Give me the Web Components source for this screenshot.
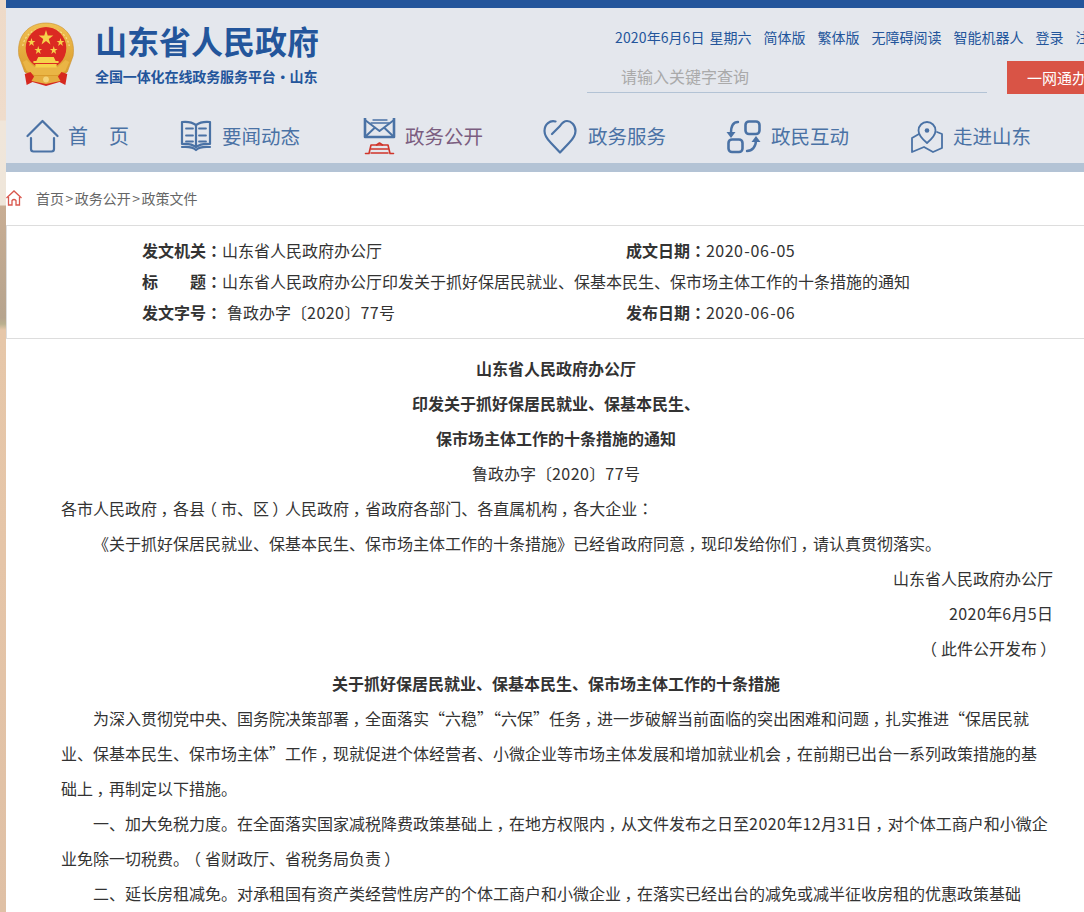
<!DOCTYPE html>
<html lang="zh-CN">
<head>
<meta charset="utf-8">
<title>山东省人民政府</title>
<style>
html,body{margin:0;padding:0;height:912px;overflow:hidden}
body{font-family:"Microsoft YaHei","Noto Sans CJK SC","Noto Sans",sans-serif;color:#333;
background:linear-gradient(to bottom,#eedac8 0,#efdccb 120px,#f0e6da 121px,#efe6da 205px,#c8ad93 206px,#b6a48e 318px,#b9b08f 324px,#e6c7a9 330px,#e5c5a8 560px,#dfc0a5 912px) no-repeat 0 0/6px 912px}
gov-page{display:block;margin-left:6px;background:#fff;height:912px}
</style>
</head>
<body>
<gov-page>
  <site-header>
    <top-links></top-links>
  </site-header>
  <nav-bar>
    <nav-item label="首　页" icon="home"></nav-item>
    <nav-item label="要闻动态" icon="book"></nav-item>
    <nav-item label="政务公开" icon="mail" active></nav-item>
    <nav-item label="政务服务" icon="heart"></nav-item>
    <nav-item label="政民互动" icon="swap"></nav-item>
    <nav-item label="走进山东" icon="map"></nav-item>
  </nav-bar>
  <bread-crumb></bread-crumb>
  <doc-meta></doc-meta>
  <doc-body>
    <doc-para kind="title">山东省人民政府办公厅</doc-para>
    <doc-para kind="title">印发关于抓好保居民就业、保基本民生、</doc-para>
    <doc-para kind="title">保市场主体工作的十条措施的通知</doc-para>
    <doc-para kind="center">鲁政办字〔2020〕77号</doc-para>
    <doc-para>各市人民政府，各县（市、区）人民政府，省政府各部门、各直属机构，各大企业：</doc-para>
    <doc-para kind="indent">《关于抓好保居民就业、保基本民生、保市场主体工作的十条措施》已经省政府同意，现印发给你们，请认真贯彻落实。</doc-para>
    <doc-para kind="right">山东省人民政府办公厅</doc-para>
    <doc-para kind="right">2020年6月5日</doc-para>
    <doc-para kind="right">（此件公开发布）</doc-para>
    <doc-para kind="title">关于抓好保居民就业、保基本民生、保市场主体工作的十条措施</doc-para>
    <doc-para kind="indent">为深入贯彻党中央、国务院决策部署，全面落实“六稳”“六保”任务，进一步破解当前面临的突出困难和问题，扎实推进“保居民就业、保基本民生、保市场主体”工作，现就促进个体经营者、小微企业等市场主体发展和增加就业机会，在前期已出台一系列政策措施的基础上，再制定以下措施。</doc-para>
    <doc-para kind="indent">一、加大免税力度。在全面落实国家减税降费政策基础上，在地方权限内，从文件发布之日至2020年12月31日，对个体工商户和小微企业免除一切税费。（省财政厅、省税务局负责）</doc-para>
    <doc-para kind="indent">二、延长房租减免。对承租国有资产类经营性房产的个体工商户和小微企业，在落实已经出台的减免或减半征收房租的优惠政策基础</doc-para>
  </doc-body>
</gov-page>
<script>
const FONT='"Microsoft YaHei","Noto Sans CJK SC","Noto Sans",sans-serif';
const TYPE=`.p{display:inline-block;text-indent:0;transform:translateX(.22em)}
.c{font-family:"Noto Sans CJK TC",sans-serif}
.l{display:inline-block;text-indent:0;transform:translateX(-.25em)}
.r{display:inline-block;text-indent:0;transform:translateX(.2em)}
.d{letter-spacing:.45px}
.h{margin:0 .85px}`;
function shadow(el,html){const r=el.attachShadow({mode:'open'});r.innerHTML=html;return r;}
function punct(s){return s.replace(/[，：（）-]|\d+/g,m=>{
  if(m==='，')return `<span class="p">${m}</span>`;
  if(m==='：')return `<span class="c" lang="zh-TW">${m}</span>`;
  if(m==='（')return `<span class="l">${m}</span>`;
  if(m==='）')return `<span class="r">${m}</span>`;
  if(m==='-')return `<span class="h">${m}</span>`;
  return `<span class="d">${m}</span>`;
});}

const EMBLEM=`<svg width="58" height="66" viewBox="0 0 60 66" preserveAspectRatio="none" aria-hidden="true" style="filter:blur(.35px)">
<defs><linearGradient id="g" x1="0" y1="0" x2="0" y2="1"><stop offset="0" stop-color="#f0c052"/><stop offset="1" stop-color="#d99a2b"/></linearGradient></defs>
<path d="M8 50 2 34C-1 14 12 1 30 1s31 13 28 33l-6 16-8 5H16z" fill="url(#g)" stroke="#c98d2a" stroke-width=".6"/>
<path d="M6 24C8 12 18 6 30 6s22 6 24 18" fill="none" stroke="#f8dd8c" stroke-width="1.2" stroke-dasharray="2 2"/>
<circle cx="30" cy="26" r="21" fill="#db2a22"/>
<path d="M6 40 10 49 18 53H42L50 49 54 40 50 38 42 45H18L10 38z" fill="#eab545"/>
<g fill="#f6d24a">
<polygon points="30,8 31.800,13.500 37.500,13.500 32.900,16.900 34.600,22.400 30,19 25.400,22.400 27.100,16.900 22.500,13.500 28.200,13.500"/>
<polygon points="15,16 16,19 19,19 16.600,20.800 17.500,24 15,22 12.500,24 13.400,20.800 11,19 14,19"/>
<polygon points="45,16 46,19 49,19 46.600,20.800 47.500,24 45,22 42.500,24 43.400,20.800 41,19 44,19"/>
<polygon points="22,24 23,27 26,27 23.600,28.800 24.500,32 22,30 19.500,32 20.400,28.800 18,27 21,27"/>
<polygon points="38,24 39,27 42,27 39.600,28.800 40.500,32 38,30 35.500,32 36.400,28.800 34,27 37,27"/>
<path d="M20 39 22 35H38L40 39H43V41H17V39z"/><rect x="19" y="42" width="22" height="3.500"/>
</g>
<path d="M8 52 14 50 18 55H42L46 50 52 52 50 63 44 60 30 64 16 60 10 63z" fill="#d6281f"/>
<path d="M18 54H42L45 59 30 62 15 59z" fill="#e5ad3f"/>
<circle cx="30" cy="57.500" r="3" fill="#f4d37a"/>
</svg>`;

class SiteHeader extends HTMLElement{constructor(){super();shadow(this,`<style>
:host{display:flex;box-sizing:border-box;height:105px;border-top:8px solid #23559b;background:#e4e7ed;overflow:hidden;font-family:${FONT}}
.logo{flex:none;width:581px;display:flex;align-items:flex-start;padding:14px 0 0 11px;box-sizing:border-box}
.logo svg{flex:none}
.names{margin-left:20px;color:#23559b;font-weight:700}
.t{font-size:32px;line-height:40px;margin-top:-2px;white-space:nowrap}
.s{font-size:14px;line-height:20px;margin-top:6px;white-space:nowrap;letter-spacing:-.1px}
.side{flex:none;width:520px}
</style><div class="logo">${EMBLEM}<div class="names"><div class="t">山东省人民政府</div><div class="s">全国一体化在线政务服务平台·山东</div></div></div>
<div class="side"><slot></slot></div>`);}}
customElements.define('site-header',SiteHeader);

class TopLinks extends HTMLElement{constructor(){super();shadow(this,`<style>
:host{display:block;font-family:${FONT}}
.links{display:flex;gap:12px;padding:18px 0 0 28px;height:22px;line-height:22px;font-size:14px;color:#23559b;white-space:nowrap}
.date{display:flex;gap:5px}
.num{letter-spacing:.15px}
.row{display:flex;margin-top:13px}
.search{flex:none;width:400px;height:32px;box-sizing:border-box;border-bottom:1px solid #b3c3d5;padding-left:34px;font-size:16px;line-height:31px;color:#aaa;white-space:nowrap}
.btn{flex:none;margin-left:20px;width:120px;height:33px;background:#d95446;color:#fff;font-size:15px;line-height:33px;padding-left:20px;box-sizing:border-box;white-space:nowrap}
</style><div class="links"><span class="date"><span><span class="num">2020</span>年<span class="num">6</span>月<span class="num">6</span>日</span><span>星期六</span></span><span>简体版</span><span>繁体版</span><span>无障碍阅读</span><span>智能机器人</span><span>登录</span><span>注册</span></div>
<div class="row"><div class="search">请输入关键字查询</div><div class="btn">一网通办</div></div>`);}}
customElements.define('top-links',TopLinks);

class NavBar extends HTMLElement{constructor(){super();shadow(this,`<style>
:host{display:grid;grid-template-columns:154px 183px 183px 183px 182px 1fr;box-sizing:border-box;height:67px;padding:0 0 0 20px;background:#e4e7ed;border-bottom:9px solid #b3c3d5;overflow:hidden}
</style><slot></slot>`);}}
customElements.define('nav-bar',NavBar);

const I={
home:{w:34,h:36,m:0,s:`<path d="M1.500 18 16.500 3 31.500 18"/><path d="M5 20V31q0 2.500 2.500 2.500H25.500q2.500 0 2.500-2.500V20"/>`},
book:{w:32,h:34,m:0,s:`<path d="M16 7C12 4 7 3.500 2 4V26C7 25.500 12 26 16 29C20 26 25 25.500 30 26V4C25 3.500 20 4 16 7V29"/><path d="M2 29C8 28.500 13 29 16 32C19 29 24 28.500 30 29"/><path d="M6 11H13M6 18H13M19 11H26M19 18H26M6 24H13M19 24H26" stroke-width="1.800" transform="translate(0 -.5)"/>`},
mail:{w:34,h:40,m:0,s:`<path d="M10 2H24M8 5H26" stroke-width="1.300"/><path d="M2 0V19H31V0" stroke-width="2.600"/><path d="M2 2 16.500 13 31 2M2 19 12 9.500M31 19 21 9.500" stroke-width="2"/><g stroke="#d0352a" stroke-width="1.600"><path d="M2.500 35.500H6L8 27H25L27 35.500H30.500"/><path d="M8 31H25M8 35H25"/><path d="M13.500 27 16.500 25 19.500 27"/></g>`},
heart:{w:36,h:36,m:0,o:-3,s:`<path d="M12.500 3.500C7 2 1.500 6 1.500 13C1.500 18 4 21 8 25L17 34.500 26 25C30 21 32.500 18 32.500 13C32.500 7 28 3 24 3C21 3 19 5 17 8L9 16"/>`},
swap:{w:36,h:36,m:0,o:-3,s:`<rect x="19.500" y="3.500" width="14" height="12.500" rx="3.500" stroke-width="2.600"/><rect x="2.500" y="21.500" width="14" height="12.500" rx="3.500" stroke-width="2.600"/><path d="M12 4C7.500 4 5 8 5 15" stroke-width="2.400"/><path d="M.5 14 9.500 14 5 20Z" fill="#4a72a5" stroke="none"/><path d="M21 33C26 33 30 29 30 22" stroke-width="2.400"/><path d="M25.500 24 34.500 24 30 18Z" fill="#4a72a5" stroke="none"/>`},
map:{w:34,h:36,m:0,s:`<path d="M16 25C10 20 7.500 16.500 7.500 12.500A8.500 8.500 0 0 1 24.500 12.500C24.500 16.500 22 20 16 25Z" stroke-width="1.800"/><circle cx="16" cy="12.500" r="2.300" fill="#4a72a5" stroke="none"/><path d="M8 16 1 20V34L13 29 22 34 31 30V16L26 14" stroke-width="1.800"/>`}
};
class NavItem extends HTMLElement{constructor(){super();
const ic=I[this.getAttribute('icon')],act=this.hasAttribute('active');
const home=this.getAttribute('icon')==='home';
shadow(this,`<style>
:host{display:grid;grid-template-columns:42px 1fr;font-family:${FONT};height:58px}
svg{margin:13px 0 0 ${ic.o||0}px;fill:none;stroke:#4a72a5;stroke-width:2.200;stroke-linecap:round;stroke-linejoin:round;overflow:hidden}
.l{font-size:${home?20:19.5}px;line-height:62px;color:${act?'#7b5d80':'#4a72a5'};white-space:pre;${home?'letter-spacing:.5px;':''}}
</style><svg width="${ic.w}" height="${ic.h}" viewBox="0 0 ${ic.w} ${ic.h}" aria-hidden="true">${ic.s}</svg><span class="l">${this.getAttribute('label')}</span>`);}}
customElements.define('nav-item',NavItem);

class BreadCrumb extends HTMLElement{constructor(){super();shadow(this,`<style>
:host{display:flex;align-items:center;height:53px;box-sizing:border-box;padding-bottom:1px;font-family:${FONT};font-size:14px;color:#666;white-space:nowrap}
svg{flex:none;width:16px;height:16px;margin-right:14px;fill:none;stroke:#d9574d;stroke-width:1.300}
i{font-style:normal;margin:0 1.500px}
</style><svg viewBox="0 0 16 16" aria-hidden="true"><path d="M.5 8 8 1 15.500 8"/><path d="M2.500 7V15H6V10.500Q8 8.500 10 10.500V15H13.500V7"/></svg><span>首页</span><i>&gt;</i><span>政务公开</span><i>&gt;</i><span>政策文件</span>`);}}
customElements.define('bread-crumb',BreadCrumb);

class DocMeta extends HTMLElement{constructor(){super();shadow(this,`<style>
:host{display:grid;grid-template-columns:484px 1fr;grid-auto-rows:31px;box-sizing:border-box;height:114px;padding:9px 0 0 135px;border:1px solid #ddd;border-right:0;font-family:${FONT};font-size:16px;line-height:31px;color:#333;white-space:nowrap}
b{font-weight:700}.wide{grid-column:1 / -1}
${TYPE}
.sp{margin-left:5px}
</style>
<div><b>${punct('发文机关：')}</b>山东省人民政府办公厅</div><div><b>${punct('成文日期：')}</b>${punct('2020-06-05')}</div>
<div class="wide"><b>${punct('标　　题：')}</b>山东省人民政府办公厅印发关于抓好保居民就业、保基本民生、保市场主体工作的十条措施的通知</div>
<div><b>${punct('发文字号：')}</b><span class="sp">${punct('鲁政办字〔2020〕77号')}</span></div><div><b>${punct('发布日期：')}</b>${punct('2020-06-06')}</div>`);}}
customElements.define('doc-meta',DocMeta);

class DocBody extends HTMLElement{constructor(){super();shadow(this,`<style>
:host{display:block;padding:12px 31px 0 55px;font-family:${FONT};font-size:16px;line-height:35px;color:#333}
</style><slot></slot>`);}}
customElements.define('doc-body',DocBody);

class DocPara extends HTMLElement{connectedCallback(){
if(this.shadowRoot)return;
const txt=this.textContent;
shadow(this,`<style>
:host{display:block}
:host([kind=title]),:host([kind=center]){text-align:center;padding-right:2px}
:host([kind=title]){font-weight:700}
:host([kind=right]){text-align:right}
:host([kind=indent]){text-indent:32px}
${TYPE}
</style>${punct(txt)}`);}}
customElements.define('doc-para',DocPara);
</script>
</body>
</html>
